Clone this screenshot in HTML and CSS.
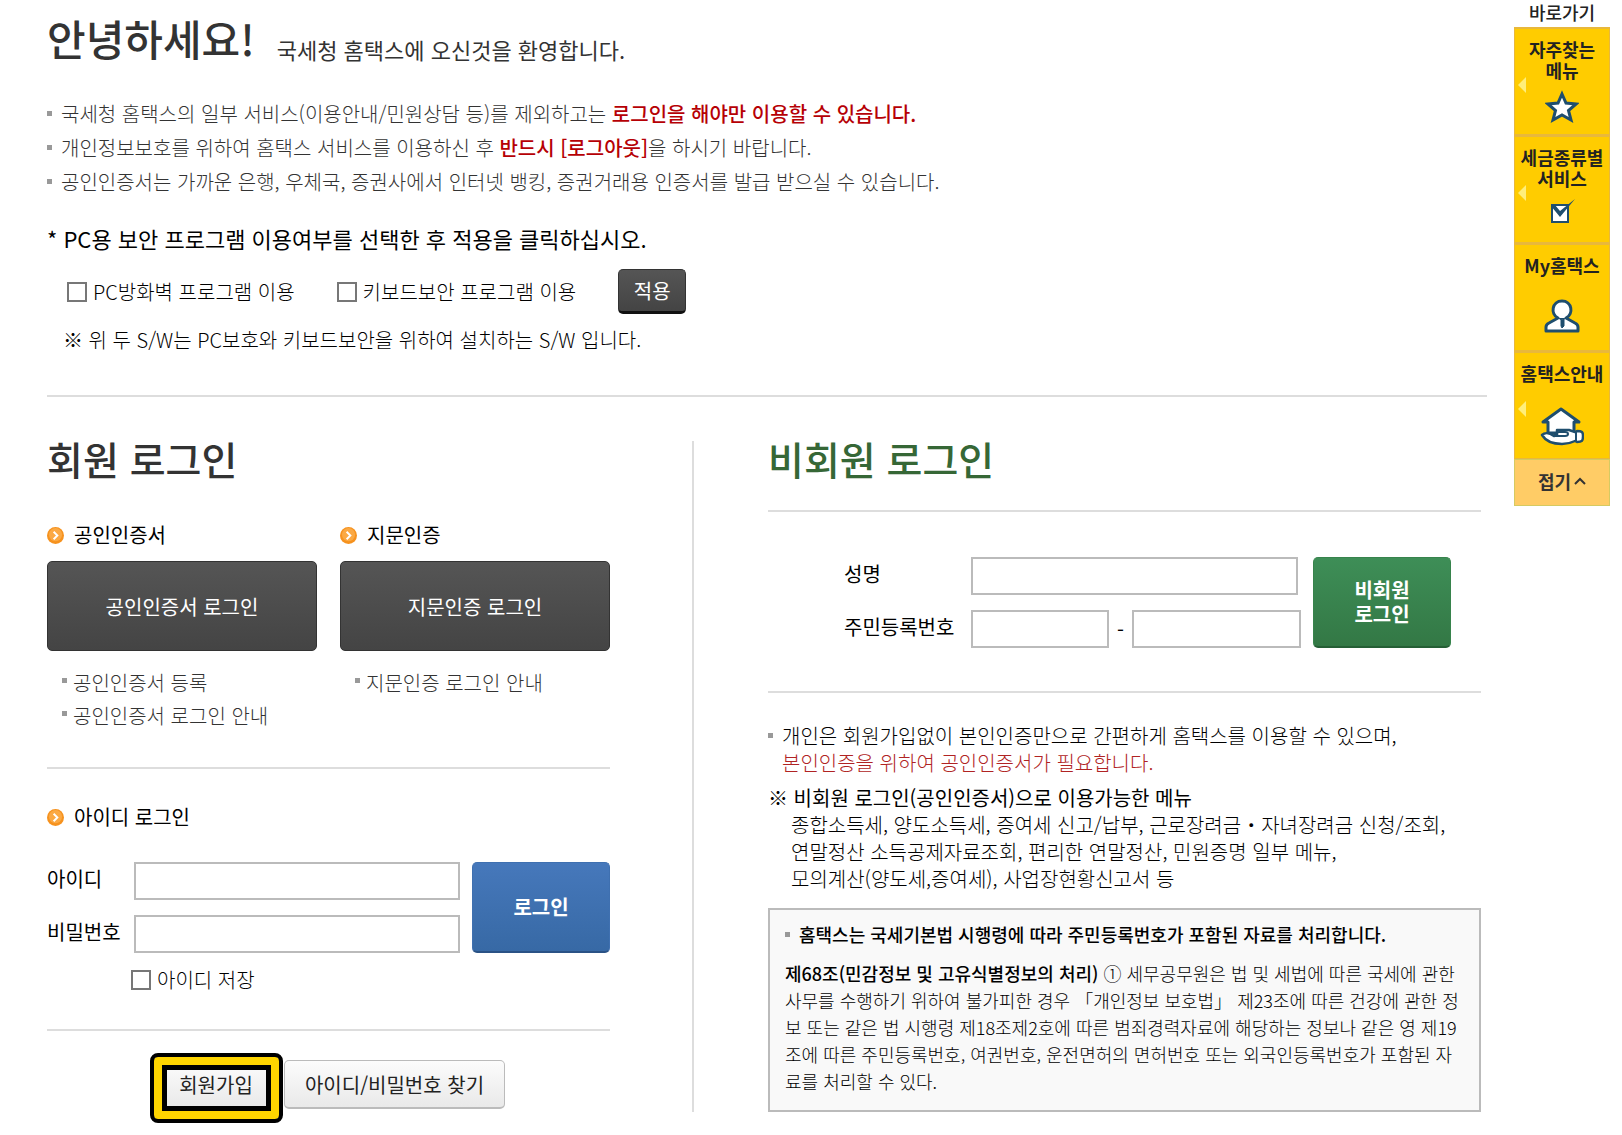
FILE: index.html
```
<!DOCTYPE html>
<html lang="ko">
<head>
    <meta charset="UTF-8">
    <meta name="viewport" content="width=device-width, initial-scale=1.0">
    <title>국세청 홈택스 로그인</title>
    <link rel="stylesheet" href="styles.css">
</head>
<body>

    <div class="page">
        <main class="content">
            <header class="welcome">
                <h1>안녕하세요!</h1>
                <p>국세청 홈택스에 오신것을 환영합니다.</p>
            </header>

            <ul class="notice-list">
                <li>국세청 홈택스의 일부 서비스(이용안내/민원상담 등)를 제외하고는 <strong>로그인을 해야만 이용할 수 있습니다.</strong></li>
                <li>개인정보보호를 위하여 홈택스 서비스를 이용하신 후 <strong>반드시 [로그아웃]</strong>을 하시기 바랍니다.</li>
                <li>공인인증서는 가까운 은행, 우체국, 증권사에서 인터넷 뱅킹, 증권거래용 인증서를 발급 받으실 수 있습니다.</li>
            </ul>

            <!-- 보안 프로그램 선택 -->
            <form class="security">
                <h2>* PC용 보안 프로그램 이용여부를 선택한 후 적용을 클릭하십시오.</h2>
                <div class="security-row">
                    <label class="check"><input type="checkbox" name="firewall">PC방화벽 프로그램 이용</label>
                    <label class="check"><input type="checkbox" name="keyboard">키보드보안 프로그램 이용</label>
                    <button type="button" class="btn btn-dark btn-apply">적용</button>
                </div>
                <p class="security-note">※ 위 두 S/W는 PC보호와 키보드보안을 위하여 설치하는 S/W 입니다.</p>
            </form>

            <div class="columns">
                <!-- 회원 로그인 -->
                <section class="member">
                    <h2 class="title">회원 로그인</h2>

                    <div class="cert">
                        <div class="cert-item">
                            <h3 class="sub-title">
                                <svg class="dot" viewBox="0 0 18 18"><circle cx="9" cy="9" r="9" fill="#f6921e"/><circle cx="9" cy="8" r="7" fill="#fba944"/><path d="M7 5l4 4-4 4" fill="none" stroke="#fff" stroke-width="2"/></svg>
                                공인인증서
                            </h3>
                            <button type="button" class="btn btn-dark btn-cert">공인인증서 로그인</button>
                            <ul class="link-list">
                                <li><a href="#">공인인증서 등록</a></li>
                                <li><a href="#">공인인증서 로그인 안내</a></li>
                            </ul>
                        </div>
                        <div class="cert-item">
                            <h3 class="sub-title">
                                <svg class="dot" viewBox="0 0 18 18"><circle cx="9" cy="9" r="9" fill="#f6921e"/><circle cx="9" cy="8" r="7" fill="#fba944"/><path d="M7 5l4 4-4 4" fill="none" stroke="#fff" stroke-width="2"/></svg>
                                지문인증
                            </h3>
                            <button type="button" class="btn btn-dark btn-cert">지문인증 로그인</button>
                            <ul class="link-list">
                                <li><a href="#">지문인증 로그인 안내</a></li>
                            </ul>
                        </div>
                    </div>

                    <form class="id-login">
                        <h3 class="sub-title">
                            <svg class="dot" viewBox="0 0 18 18"><circle cx="9" cy="9" r="9" fill="#f6921e"/><circle cx="9" cy="8" r="7" fill="#fba944"/><path d="M7 5l4 4-4 4" fill="none" stroke="#fff" stroke-width="2"/></svg>
                            아이디 로그인
                        </h3>
                        <div class="login-form">
                            <div class="fields">
                                <div class="field">
                                    <label for="userId">아이디</label>
                                    <input type="text" id="userId">
                                </div>
                                <div class="field">
                                    <label for="userPw">비밀번호</label>
                                    <input type="password" id="userPw">
                                </div>
                            </div>
                            <button type="button" class="btn btn-login btn-blue">로그인</button>
                        </div>
                        <label class="check check-save"><input type="checkbox" name="saveId">아이디 저장</label>
                    </form>

                    <div class="member-links">
                        <button type="button" class="btn btn-light btn-join">회원가입</button>
                        <button type="button" class="btn btn-light">아이디/비밀번호 찾기</button>
                    </div>
                </section>

                <!-- 비회원 로그인 -->
                <section class="guest">
                    <h2 class="title title-green">비회원 로그인</h2>

                    <form class="login-form guest-form">
                        <div class="fields">
                            <div class="field">
                                <label for="guestName">성명</label>
                                <input type="text" id="guestName" class="name-input">
                            </div>
                            <div class="field">
                                <label for="rrn1">주민등록번호</label>
                                <input type="text" id="rrn1" class="rrn-first">
                                <span class="dash">-</span>
                                <input type="password" id="rrn2" aria-label="주민등록번호 뒷자리">
                            </div>
                        </div>
                        <button type="button" class="btn btn-login btn-green">비회원<br>로그인</button>
                    </form>

                    <div class="guest-info">
                        <p class="bullet">개인은 회원가입없이 본인인증만으로 간편하게 홈택스를 이용할 수 있으며,<br><span class="red">본인인증을 위하여 공인인증서가 필요합니다.</span></p>
                        <h3>※ 비회원 로그인(공인인증서)으로 이용가능한 메뉴</h3>
                        <p class="menus">종합소득세, 양도소득세, 증여세 신고/납부, 근로장려금・자녀장려금 신청/조회,<br>연말정산 소득공제자료조회, 편리한 연말정산, 민원증명 일부 메뉴,<br>모의계산(양도세,증여세), 사업장현황신고서 등</p>
                    </div>

                    <div class="law-box">
                        <p class="law-title">홈택스는 국세기본법 시행령에 따라 주민등록번호가 포함된 자료를 처리합니다.</p>
                        <p><strong>제68조(민감정보 및 고유식별정보의 처리)</strong> ① 세무공무원은 법 및 세법에 따른 국세에 관한<br>사무를 수행하기 위하여 불가피한 경우 「개인정보 보호법」 제23조에 따른 건강에 관한 정<br>보 또는 같은 법 시행령 제18조제2호에 따른 범죄경력자료에 해당하는 정보나 같은 영 제19<br>조에 따른 주민등록번호, 여권번호, 운전면허의 면허번호 또는 외국인등록번호가 포함된 자<br>료를 처리할 수 있다.</p>
                    </div>
                </section>
            </div>
        </main>

        <!-- 바로가기 메뉴 -->
        <aside class="quick">
            <h2>바로가기</h2>
            <a href="#" class="quick-item has-arrow">
                <span>자주찾는<br>메뉴</span>
                <svg width="34" height="34" viewBox="0 0 34 34"><path d="M17 4l4 9 10 1-7.500 6.500 2.500 9.500-9-5-9 5 2.500-9.500L3 14l10-1z" fill="#fff" stroke="#1f4e6e" stroke-width="3"/></svg>
            </a>
            <a href="#" class="quick-item has-arrow">
                <span>세금종류별<br>서비스</span>
                <svg width="26" height="26" viewBox="0 0 26 26"><path d="M3 7h16v17H3z" fill="#fff" stroke="#1f4e6e" stroke-width="2"/><path d="M2 8l4-1 5 6L26 1 11 19z" fill="#1f4e6e"/></svg>
            </a>
            <a href="#" class="quick-item quick-single">
                <span>My홈택스</span>
                <svg width="36" height="36" viewBox="0 0 36 36"><path d="M14 20C6 16 8 3 18 3s12 13 4 17l9 5c2 1 3 2 3 4v4H2v-4c0-2 1-3 3-4z" fill="#fff" stroke="#1f4e6e" stroke-width="3" stroke-linejoin="round"/><path d="M14 20l4 2 4-2M17 21h3v7l-2 2-1-2z" fill="#1f4e6e" stroke="#1f4e6e" stroke-width="1"/></svg>
            </a>
            <a href="#" class="quick-item quick-single has-arrow">
                <span>홈택스안내</span>
                <svg width="44" height="40" viewBox="0 0 44 40"><path d="M8 27V16H3L21 3l18 13h-5v11z" fill="#fff" stroke="#1f4e6e" stroke-width="3" stroke-linejoin="round"/><path d="M17 24h12l6 2 2-1c5 0 6 1 6 5 0 5-1 6-6 6l-2-1c-4 2-8 3-13 3-12 0-17-4-20-9 3-3 8-2 12 1l3-1z" fill="#fff" stroke="#1f4e6e" stroke-width="2.500" stroke-linejoin="round"/><path d="M14 30h11c4 0 4-4 0-4h-6c-3 0-4 2-5 4M36 26v9" fill="none" stroke="#1f4e6e" stroke-width="2"/></svg>
            </a>
            <button type="button" class="quick-fold">접기<svg width="12" height="8" viewBox="0 0 12 8"><path d="M1 7l5-5 5 5" fill="none" stroke="#333" stroke-width="2"/></svg></button>
        </aside>
    </div>

</body>
</html>
```
FILE: styles.css
```
*, *::before, *::after {
    box-sizing: border-box;
}
body {
    margin: 0;
    background-color: #fff;
    color: #000;
    font-family: "Noto Sans CJK KR", "Noto Sans", sans-serif;
    font-size: 20px;
    font-weight: 300;
    line-height: 27px;
}
h1, h2, h3, p, ul {
    margin: 0;
    padding: 0;
}
ul {
    list-style: none;
}
a {
    color: inherit;
    text-decoration: none;
}
button, input {
    font: inherit;
    margin: 0;
}
.page {
    display: flex;
    align-items: flex-start;
    padding: 0 12px 20px 47px;
}
.content {
    flex: 1;
    min-width: 0;
    margin-right: 27px;
}

/* 인사말 */
.welcome {
    display: flex;
    align-items: flex-end;
    gap: 22px;
    padding-top: 8px;
    color: #333;
}
.welcome h1 {
    font-size: 42px;
    font-weight: 500;
    line-height: 60px;
}
.welcome p {
    font-size: 22px;
    font-weight: 400;
    line-height: 38px;
}
.notice-list {
    margin-top: 29px;
    color: #333;
    line-height: 34px;
}
.notice-list li, .link-list li, .bullet, .law-title {
    position: relative;
    padding-left: 14px;
}
.notice-list li::before, .link-list li::before, .bullet::before, .law-title::before {
    content: "";
    position: absolute;
    left: 0;
    top: 14px;
    width: 5px;
    height: 5px;
    background-color: #999;
}
.notice-list strong {
    color: #b60005;
    font-weight: 500;
}

/* 보안 프로그램 */
.security {
    margin-top: 22px;
    padding-bottom: 40px;
    border-bottom: 2px solid #ddd;
}
.security h2 {
    font-size: 22px;
    font-weight: 400;
    line-height: 34px;
}
.security-row {
    display: flex;
    align-items: center;
    gap: 42px;
    margin: 14px 0 11px 20px;
}
.security-note {
    padding-left: 16px;
    line-height: 30px;
}
.check {
    display: flex;
    align-items: center;
    gap: 6px;
}
.check input {
    appearance: none;
    width: 20px;
    height: 20px;
    border: 2px solid #777;
    background-color: #fff;
}
.check input:checked {
    background-color: #777;
}

.btn {
    padding: 0;
    border-radius: 5px;
    cursor: pointer;
}
.btn-dark {
    border: 1px solid #333;
    background: linear-gradient(#555, #444);
    color: #fff;
    font-weight: 400;
}
.btn-apply {
    width: 68px;
    height: 45px;
    border-bottom: 3px solid #111;
}

/* 로그인 영역 */
.columns {
    display: grid;
    grid-template-columns: minmax(0, 563fr) minmax(0, 789fr);
    gap: 82px;
    margin-top: 44px;
    padding-right: 6px;
}
.guest {
    padding-left: 74px;
    border-left: 2px solid #ddd;
}
.title {
    padding-bottom: 6px;
    color: #333;
    font-size: 39px;
    font-weight: 500;
    line-height: 34px;
}
.title-green {
    color: #366736;
}
.sub-title {
    display: flex;
    align-items: center;
    gap: 10px;
    font-size: 20px;
    font-weight: 400;
    line-height: 26px;
}
.dot {
    width: 17px;
    height: 17px;
}
.cert {
    display: flex;
    gap: 23px;
    padding: 41px 0 35px;
    border-bottom: 2px solid #ddd;
}
.cert-item {
    flex: 1;
}
.btn-cert {
    display: block;
    width: 100%;
    height: 90px;
    margin: 13px 0 15px;
}
.link-list {
    padding-left: 15px;
    color: #333;
    line-height: 33px;
}
.link-list li {
    padding-left: 11px;
}
.link-list li::before {
    top: 12px;
}
.id-login {
    padding: 35px 0 36px;
    border-bottom: 2px solid #ddd;
}
.login-form {
    display: flex;
    gap: 12px;
}
.id-login .login-form {
    margin: 32px 0 14px;
}
.fields {
    display: flex;
    flex: 1;
    flex-direction: column;
    gap: 15px;
    min-width: 0;
}
.field {
    display: flex;
    align-items: center;
}
.field label {
    flex: none;
    width: 87px;
    padding-bottom: 5px;
    font-weight: 400;
}
.field input {
    flex: 1;
    min-width: 0;
    height: 38px;
    padding: 0 8px;
    border: 2px solid #bbb;
    background-color: #fff;
}
.btn-login {
    width: 138px;
    height: 91px;
    color: #fff;
    font-weight: 700;
    line-height: 24px;
}
.btn-blue {
    border: 1px solid #3f70b0;
    border-bottom: 2px solid #2a5285;
    background: linear-gradient(#4678bb, #3769a5);
}
.btn-green {
    border: 1px solid #37834c;
    border-bottom: 2px solid #255f35;
    background: linear-gradient(#3e8e57, #337845);
}
.check-save {
    margin-left: 84px;
    line-height: 26px;
}
.member-links {
    display: flex;
    justify-content: center;
    gap: 4px;
    margin-top: 29px;
}
.btn-light {
    width: 221px;
    height: 49px;
    border: 1px solid #bbb;
    border-bottom-width: 2px;
    background: linear-gradient(#fcfcfc, #e9e9e9);
    color: #222;
    font-weight: 400;
}
.btn-join {
    position: relative;
    width: 128px;
}
/* 회원가입 강조 테두리 */
.btn-join::after {
    content: "";
    position: absolute;
    top: -8px;
    left: -3px;
    width: 133px;
    height: 70px;
    border: 4px solid #000;
    border-radius: 8px;
    box-shadow: inset 0 0 0 8px #ffd500, inset 0 0 0 13px #000;
}

/* 비회원 */
.guest-form {
    margin-top: 29px;
    padding: 45px 30px 43px 76px;
    border-top: 2px solid #ddd;
    border-bottom: 2px solid #ddd;
}
.guest-form .field label {
    width: 127px;
}
.guest-form .name-input {
    margin-right: 3px;
}
.guest-form .rrn-first {
    flex: none;
    width: 138px;
}
.dash {
    width: 23px;
    font-weight: 400;
    text-align: center;
}
.guest-info {
    padding: 29px 0 16px;
}
.red {
    color: #b02323;
}
.guest-info h3 {
    margin-top: 8px;
    font-size: 20px;
    font-weight: 400;
}
.menus {
    padding-left: 23px;
}
.law-box {
    padding: 11px 15px 15px;
    border: 2px solid #bbb;
    background-color: #f9f9f9;
    font-size: 18px;
}
.law-box strong {
    font-weight: 500;
}
.law-title {
    margin-bottom: 12px;
    font-weight: 500;
}
.bullet::before, .law-title::before {
    top: 11px;
}

/* 바로가기 */
.quick {
    flex: none;
    width: 96px;
    color: #222;
    font-size: 18px;
    font-weight: 700;
    text-align: center;
}
.quick h2 {
    padding-bottom: 3px;
    font-size: 18px;
    font-weight: 500;
    line-height: 24px;
}
.quick-item {
    position: relative;
    display: flex;
    flex-direction: column;
    align-items: center;
    gap: 9px;
    height: 108px;
    padding-top: 10px;
    border: 1px solid #e8b83c;
    border-top-width: 2px;
    background-color: #fc0;
    line-height: 21px;
    white-space: nowrap;
}
.quick-single {
    gap: 22px;
}
.has-arrow::before {
    content: "";
    position: absolute;
    left: 3px;
    top: 48px;
    border: 8px solid transparent;
    border-right-color: #ffee7a;
    border-left-width: 0;
}
.quick-fold {
    display: flex;
    align-items: center;
    justify-content: center;
    gap: 3px;
    width: 100%;
    height: 47px;
    padding: 0 0 3px;
    border: 1px solid #d5ca62;
    background-color: #fc6;
    color: #333;
    cursor: pointer;
}
```
